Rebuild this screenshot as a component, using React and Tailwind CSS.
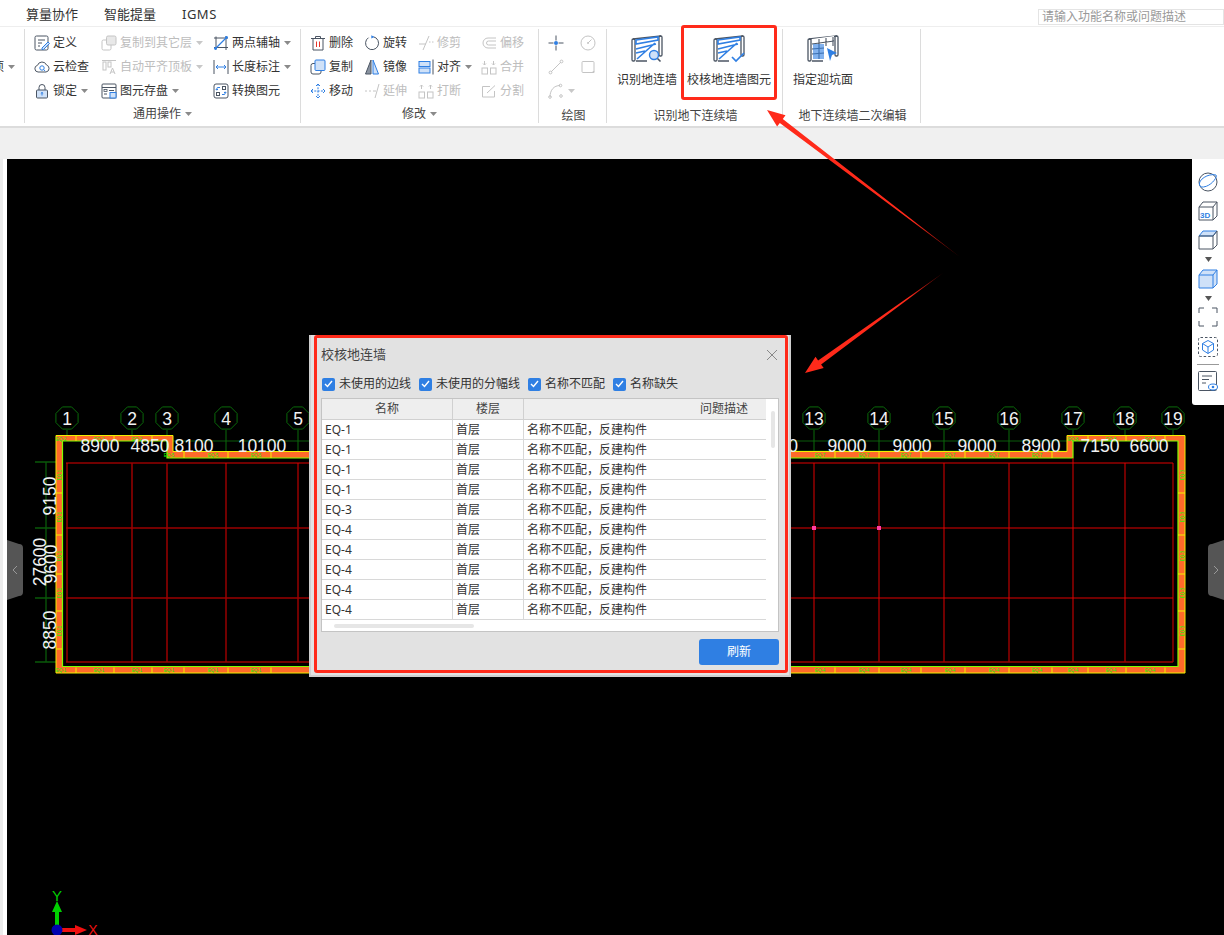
import React from 'react'

const INK = '#4b5563'
const BLUE = '#2f7fe3'
const PALE = '#cfe1f8'
const OFF = '#c4c4c4'

const Ico = ({ children, size = 16, vb = 16 }) => (
  <svg width={size} height={size} viewBox={`0 0 ${vb} ${vb}`} fill="none" strokeWidth="1" className="shrink-0">
    {children}
  </svg>
)

const Caret = ({ color = '#8a8a8a' }) => (
  <svg width="7" height="4" viewBox="0 0 7 4" className="shrink-0 ml-[4px]">
    <path d="M0 0h7L3.5 4z" fill={color} />
  </svg>
)

const icons = {
  define: (
    <Ico>
      <rect x="1" y="1" width="13" height="14" rx="1.5" stroke={INK} />
      <path d="M4 5h7M4 8h4M4 11h2" stroke={INK} />
      <path d="M8 13l6-6 1.5 1.5-6 6H8z" fill={PALE} stroke={BLUE} />
    </Ico>
  ),
  cloud: (
    <Ico>
      <path d="M4 13a3.4 3.4 0 0 1-.5-6.7A4.8 4.8 0 0 1 12.5 6 3.6 3.6 0 0 1 12 13z" stroke={INK} />
      <circle cx="8" cy="9" r="2.2" stroke={BLUE} />
      <path d="M9.7 10.7l1.5 1.3" stroke={BLUE} />
    </Ico>
  ),
  lock: (
    <Ico>
      <path d="M5 7V4.5a3 3 0 0 1 6 0V7" stroke={INK} />
      <rect x="2.5" y="7" width="11" height="8" rx="1" fill={PALE} stroke={INK} />
      <path d="M8 9.5v3M6.8 10.5L8 9.4l1.2 1.1" stroke={BLUE} />
    </Ico>
  ),
  copyLayer: (
    <Ico>
      <rect x="1" y="5" width="9" height="10" rx="1.5" stroke={OFF} fill="#fff" />
      <rect x="5.5" y="1" width="9.5" height="9" rx="1.5" stroke={OFF} fill="#e8e8e8" />
    </Ico>
  ),
  autoAlign: (
    <Ico>
      <path d="M1 1.5h14" stroke={OFF} />
      <rect x="2" y="3" width="3" height="8" stroke={OFF} />
      <rect x="7" y="3" width="3" height="5" stroke={OFF} />
      <path d="M9 15l2.5-6 2.5 6M10 13h3" stroke={OFF} />
    </Ico>
  ),
  save: (
    <Ico>
      <rect x="1" y="1" width="14" height="14" rx="1" stroke={INK} />
      <path d="M1 4.5h14" stroke={INK} />
      <rect x="3" y="6.5" width="3" height="2" stroke={INK} strokeWidth=".8" />
      <path d="M8 7.5h5M3 11h3" stroke={INK} />
      <rect x="9" y="9.5" width="6" height="5.5" fill={PALE} stroke={BLUE} />
    </Ico>
  ),
  twoPoint: (
    <Ico>
      <path d="M3 1.5v13M1 12.5h14M13 1v14M1 3h14" stroke={INK} />
      <path d="M2 14L14 2" stroke={BLUE} strokeWidth="1.3" />
      <circle cx="2.5" cy="13.5" r="1.4" fill={BLUE} />
      <circle cx="13.5" cy="2.5" r="1.4" fill={BLUE} />
    </Ico>
  ),
  length: (
    <Ico>
      <path d="M1 1v14M15 1v14" stroke={INK} />
      <path d="M3 8h10M5 6L3 8l2 2M11 6l2 2-2 2" stroke={BLUE} />
    </Ico>
  ),
  convert: (
    <Ico>
      <rect x="1" y="1" width="14" height="14" rx="2" stroke={INK} />
      <rect x="9.5" y="3.5" width="3" height="3" stroke={INK} />
      <rect x="3.5" y="9.5" width="3" height="3" stroke={INK} />
      <path d="M7 4.5H5a1.2 1.2 0 0 0-1.2 1.2V7M2.7 6L3.8 7.2 5 6M9 11.5h2a1.2 1.2 0 0 0 1.2-1.2V9M11 10l1.2-1.2 1.1 1.2" stroke={BLUE} />
    </Ico>
  ),
  trash: (
    <Ico>
      <path d="M1 3.5h14M5.5 3V1.5h5V3" stroke={INK} />
      <path d="M3 3.5V15h10V3.5" stroke={INK} />
      <path d="M6.5 6.5v5.5M9.5 6.5v5.5" stroke="#e5352b" />
    </Ico>
  ),
  rotate: (
    <Ico>
      <path d="M9.5 1.8A6.5 6.5 0 1 1 4.5 2.7" stroke={INK} />
      <path d="M7.3 0.3l3.2 1.6-3.2 1.7z" fill={BLUE} />
    </Ico>
  ),
  trim: (
    <Ico>
      <path d="M5 15L11 1" stroke={OFF} />
      <path d="M1 9h7" stroke={OFF} />
      <path d="M11 7h1.5M14 7h1.5" stroke={OFF} />
    </Ico>
  ),
  offset: (
    <Ico>
      <path d="M15 3H7a5 5 0 0 0 0 10h8" stroke={OFF} />
      <path d="M15 6H7.5a2 2 0 0 0 0 4H15" stroke={OFF} />
    </Ico>
  ),
  copy: (
    <Ico>
      <rect x="1" y="4.5" width="10" height="10.5" rx="2" stroke={INK} />
      <rect x="5" y="1" width="10" height="10.5" rx="1" fill={PALE} stroke={BLUE} />
    </Ico>
  ),
  mirror: (
    <Ico>
      <path d="M7 1v14H1.5z" fill="#8a93a0" stroke={INK} />
      <path d="M9 1v14h5.5z" fill={PALE} stroke={BLUE} />
    </Ico>
  ),
  align: (
    <Ico>
      <rect x="1" y="2.5" width="11" height="5" fill={PALE} stroke={BLUE} />
      <rect x="1" y="9" width="11" height="5" fill={PALE} stroke={BLUE} />
      <path d="M15 0.5v15" stroke={INK} />
    </Ico>
  ),
  merge: (
    <Ico>
      <rect x="1" y="9" width="5.5" height="6" stroke={OFF} />
      <rect x="9.5" y="9" width="5.5" height="6" stroke={OFF} />
      <path d="M3.5 2v4M2 4.5L3.5 6 5 4.5M12.5 2v4M11 4.5L12.5 6 14 4.5" stroke={OFF} />
    </Ico>
  ),
  move: (
    <Ico>
      <path d="M8 1v14M1 8h14" stroke={BLUE} strokeDasharray="2 1.3" />
      <path d="M6 3l2-2 2 2M6 13l2 2 2-2M3 6L1 8l2 2M13 6l2 2-2 2" stroke={BLUE} />
    </Ico>
  ),
  extend: (
    <Ico>
      <path d="M11 15l4-14" stroke={OFF} />
      <path d="M1 8h2M5 8h2M9 8h3" stroke={OFF} />
    </Ico>
  ),
  breakUp: (
    <Ico>
      <rect x="1" y="9" width="5.5" height="6" stroke={OFF} />
      <rect x="9.5" y="9" width="5.5" height="6" stroke={OFF} />
      <path d="M3.5 6V2M2 3.5L3.5 2 5 3.5M12.5 6V2M11 3.5L12.5 2 14 3.5" stroke={OFF} />
    </Ico>
  ),
  split: (
    <Ico>
      <path d="M9 3.5H1.5V14h12V8" stroke={OFF} />
      <path d="M6 10l8-7.5" stroke={OFF} />
    </Ico>
  ),
  point: (
    <Ico>
      <path d="M0.5 8h5M10.5 8h5M8 0.5v5M8 10.5v5" stroke={INK} />
      <circle cx="8" cy="8" r="2" fill={BLUE} />
    </Ico>
  ),
  dial: (
    <Ico>
      <circle cx="8" cy="8" r="7" stroke={OFF} />
      <path d="M8 8l3.5-3.5" stroke={OFF} />
      <circle cx="8" cy="8" r="1" fill={OFF} />
    </Ico>
  ),
  line: (
    <Ico>
      <path d="M3 13L13 3" stroke={OFF} />
      <circle cx="2.5" cy="13.5" r="1.4" stroke={OFF} />
      <circle cx="13.5" cy="2.5" r="1.4" stroke={OFF} />
    </Ico>
  ),
  rect: (
    <Ico>
      <rect x="2" y="2.5" width="12" height="11" rx="1" stroke={OFF} />
      <circle cx="13.5" cy="13" r="1" fill={OFF} />
    </Ico>
  ),
  arc: (
    <Ico>
      <path d="M2 14C2 7 6 2.5 12 2.5" stroke={OFF} />
      <circle cx="2" cy="14" r="1.3" stroke={OFF} />
      <circle cx="12.5" cy="2.5" r="1.3" stroke={OFF} />
      <circle cx="13" cy="13" r="1.3" stroke={OFF} />
    </Ico>
  ),
}

const WallFrame = ({ children }) => (
  <svg width="32" height="30" viewBox="0 0 32 30" fill="none" className="shrink-0">
    <path d="M2 5l28-3" stroke={INK} strokeWidth="1.5" />
    <rect x="1" y="5" width="3" height="22" rx="1.2" stroke={INK} strokeWidth="1.3" />
    <rect x="28" y="2" width="3" height="20" rx="1.2" stroke={INK} strokeWidth="1.3" />
    <path d="M5 27h11" stroke={INK} strokeWidth="1.5" />
    {children}
  </svg>
)

const BigIconFind = () => (
  <WallFrame>
    <path d="M5 6l22-3v3L5 10zM5 15l20-5M6 25L24 9M5 19l9-2" stroke={BLUE} strokeWidth="1.6" />
    <circle cx="23" cy="21" r="4.5" fill={PALE} stroke={BLUE} strokeWidth="1.4" />
    <path d="M26.5 24.5l3 3" stroke={INK} strokeWidth="1.6" />
  </WallFrame>
)

const BigIconCheck = () => (
  <WallFrame>
    <path d="M5 6l22-3v3L5 10zM5 15l20-5M6 25L24 9M5 19l9-2" stroke={BLUE} strokeWidth="1.6" />
    <path d="M19 23l4 4 8-8" stroke={BLUE} strokeWidth="1.7" />
  </WallFrame>
)

const BigIconFace = () => (
  <WallFrame>
    <path d="M5 5l22-3v16H5z" fill="#fff" />
    <path d="M12 5v20M19 4v8M26 3v9M5 10l22-3M5 15l12-1M5 20l12-1" stroke={INK} strokeWidth="1.1" />
    <rect x="6" y="10" width="11" height="15" fill={BLUE} opacity=".6" />
    <path d="M20 14l10 5-5 2-2 6z" fill={BLUE} />
  </WallFrame>
)

const Item = ({ icon, label, caret, off }) => (
  <div className="flex items-center h-6 text-xs">
    {icons[icon]}
    {label && <span className={`ml-[3px] whitespace-nowrap ${off ? 'text-[#bdbdbd]' : 'text-[#333]'}`}>{label}</span>}
    {caret && <Caret color={off ? '#c8c8c8' : '#8a8a8a'} />}
  </div>
)

const Group = ({ width, label, caret, children, labelClass = 'pt-[2px]' }) => (
  <div className="flex flex-col h-[94px] border-r border-[#dcdcdc]" style={{ width }}>
    <div className="flex-1 min-h-0 pt-[2px]">{children}</div>
    <div className={`flex items-center justify-center h-[20px] text-xs text-[#444] ${labelClass}`}>
      <span>{label}</span>
      {caret && <Caret />}
    </div>
  </div>
)

const BigButton = ({ icon, label, w }) => (
  <div className="flex flex-col items-center" style={{ width: w }}>
    <div className="mt-[3px] h-[30px] flex items-center">{icon}</div>
    <span className="mt-[8px] text-xs text-[#333] whitespace-nowrap">{label}</span>
  </div>
)

const Ribbon = () => (
  <div className="h-[102px] shrink-0 bg-white border-t border-[#eeeeee] border-b-2 border-b-[#dcdcdc] flex pt-[2px]">
    <Group width={25}>
      <div className="h-6" />
      <div className="flex items-center h-6 text-xs text-[#333]">
        <span className="w-[4px] overflow-hidden flex justify-end shrink-0">
          <span className="whitespace-nowrap">项</span>
        </span>
        <Caret />
      </div>
    </Group>
    <Group width={276} label="通用操作" caret>
      <div className="grid grid-cols-[67px_112px_1fr] pl-[9px]">
        <Item icon="define" label="定义" />
        <Item icon="copyLayer" label="复制到其它层" caret off />
        <Item icon="twoPoint" label="两点辅轴" caret />
        <Item icon="cloud" label="云检查" />
        <Item icon="autoAlign" label="自动平齐顶板" caret off />
        <Item icon="length" label="长度标注" caret />
        <Item icon="lock" label="锁定" caret />
        <Item icon="save" label="图元存盘" caret />
        <Item icon="convert" label="转换图元" />
      </div>
    </Group>
    <Group width={238} label="修改" caret>
      <div className="grid grid-cols-[54px_54px_63px_1fr] pl-[9px]">
        <Item icon="trash" label="删除" />
        <Item icon="rotate" label="旋转" />
        <Item icon="trim" label="修剪" off />
        <Item icon="offset" label="偏移" off />
        <Item icon="copy" label="复制" />
        <Item icon="mirror" label="镜像" />
        <Item icon="align" label="对齐" caret />
        <Item icon="merge" label="合并" off />
        <Item icon="move" label="移动" />
        <Item icon="extend" label="延伸" off />
        <Item icon="breakUp" label="打断" off />
        <Item icon="split" label="分割" off />
      </div>
    </Group>
    <Group width={68} label="绘图" labelClass="pt-[6px] pl-[2px]">
      <div className="grid grid-cols-[32px_1fr] pl-[9px]">
        <Item icon="point" />
        <Item icon="dial" />
        <Item icon="line" />
        <Item icon="rect" />
        <Item icon="arc" caret off />
      </div>
    </Group>
    <Group width={176} label="识别地下连续墙" labelClass="pt-[6px] pl-[2px]">
      <div className="flex pl-[2px] items-start">
        <BigButton icon={<BigIconFind />} label="识别地连墙" w={76} />
        <BigButton icon={<BigIconCheck />} label="校核地连墙图元" w={88} />
      </div>
    </Group>
    <Group width={138} label="地下连续墙二次编辑" labelClass="pt-[6px] pl-[2px]">
      <div className="flex pl-[2px] items-start">
        <BigButton icon={<BigIconFace />} label="指定迎坑面" w={76} />
      </div>
    </Group>
  </div>
)

const AXES = [
  ['1', 67], ['2', 132], ['3', 167], ['4', 226], ['5', 298],
  ['13', 814], ['14', 879], ['15', 944], ['16', 1009], ['17', 1073], ['18', 1125], ['19', 1173],
]

const TOP_DIMS = [
  ['8900', 100], ['4850', 150], ['8100', 194], ['10100', 262],
  ['0', 793], ['9000', 847], ['9000', 912], ['9000', 977], ['8900', 1041], ['7150', 1100], ['6600', 1149],
]

const SIDE_DIMS = [
  ['9150', 50, 496], ['27600', 40, 562], ['9600', 51, 564], ['8850', 50, 630],
]

const BOTTOM_TICKS = [76, 114, 152, 184, 228, 271, 790, 835, 879, 921, 965, 1009, 1052, 1088, 1126, 1165]
const TOP_TICKS = [76, 114, 152, 184, 228, 271, 835, 879, 921, 965, 1009, 1052, 1088, 1126, 1165]
const SIDE_TICKS = [493, 535, 574, 611, 649]

const octagon = (cx, cy, r) =>
  Array.from({ length: 8 }, (_, i) => {
    const a = (Math.PI / 8) * (2 * i + 1)
    return `${cx + r * Math.cos(a)},${cy + r * Math.sin(a)}`
  }).join(' ')

const Drawing = () => (
  <svg className="absolute inset-0" width="1217" height="776" viewBox="7 159 1217 776">
    {/* dimension lines */}
    <g stroke="#0a5a0a" strokeWidth="1">
      <path d="M66 441H170M66 451H170M173 441H310M790 441H1067M790 451H1067M1073 451H1172M1172 441V463" />
      <path d="M35 462H56M35 528H56M35 598H56M35 662H56" strokeWidth="1.3" />
      <path d="M46 462V662" strokeWidth="1.3" />
    </g>
    {AXES.map(([n, x]) => (
      <g key={n}>
        <polygon points={octagon(x, 418, 12)} fill="none" stroke="#0a6a0a" />
        <path d={`M${x} 430V463`} stroke="#0a6a0a" />
      </g>
    ))}

    {/* wall band */}
    <path d="M56 435.5H173V451.5H1067V435.5H1185V673H56Z" fill="#ff6a2a" stroke="#f0f000" strokeWidth="1" />
    <path d="M62.5 441H167V458H1073V441H1178V666.5H62.5Z" fill="#000" stroke="#80ff00" strokeWidth="1.2" />
    <g stroke="#f2f200" strokeWidth="1">
      {BOTTOM_TICKS.map((x) => <path key={x} d={`M${x} 667.5V673`} />)}
      {TOP_TICKS.map((x) => (
        <path key={x} d={x < 173 || x > 1067 ? `M${x} 435.5V441` : `M${x} 452V458`} />
      ))}
      {SIDE_TICKS.map((y) => <path key={y} d={`M56 ${y}H62M1178 ${y}H1185`} />)}
    </g>
    <g fill="#00ff00" fontSize="4.5" fontFamily="'Liberation Sans', sans-serif" textAnchor="middle">
      {BOTTOM_TICKS.slice(0, 6).map((x) => <text key={x} x={x - 15} y="672">EQ-1</text>)}
      {BOTTOM_TICKS.slice(7).map((x) => <text key={x} x={x - 15} y="672">EQ-4</text>)}
      {TOP_TICKS.slice(0, 3).map((x) => <text key={x} x={x - 15} y="440.5">EQ-2</text>)}
      {TOP_TICKS.slice(3, 6).map((x) => <text key={x} x={x - 15} y="456.5">EQ-5</text>)}
      {TOP_TICKS.slice(6, 12).map((x) => <text key={x} x={x - 15} y="456.5">EQ-7</text>)}
      {TOP_TICKS.slice(12).map((x) => <text key={x} x={x - 15} y="440.5">EQ-8</text>)}
      {SIDE_TICKS.map((y) => (
        <g key={y}>
          <text transform={`translate(61 ${y - 18}) rotate(-90)`}>EQ-1</text>
          <text transform={`translate(1184 ${y - 18}) rotate(-90)`}>EQ-3</text>
        </g>
      ))}
    </g>

    {/* grid */}
    <g stroke="#e00000" strokeWidth="1">
      <path d="M66 463H1173M790 528H1173M790 598H1173" />
      <path d="M67 463V662M226 463V662M298 463V662M814 463V662M879 463V662M944 463V662M1009 463V662M1073 458V662M1125 463V662M1173 463V662" />
    </g>
    <g stroke="#9a0000" strokeWidth="1.5">
      <path d="M66 528H310M66 598H310M66 662H310M790 662H1173M132 463V662M167 463V662" />
    </g>
    <rect x="812" y="526" width="4" height="4" fill="#ff3ea5" />
    <rect x="877" y="526" width="4" height="4" fill="#ff3ea5" />

    {/* labels */}
    <g fill="#f2f2f2" fontFamily="'Liberation Sans', sans-serif" textAnchor="middle" fontSize="17.5">
      {AXES.map(([n, x]) => <text key={n} x={x} y="425">{n}</text>)}
      {TOP_DIMS.map(([t, x], i) => <text key={i} x={x} y="452">{t}</text>)}
      {SIDE_DIMS.map(([t, x, y]) => (
        <text key={t} transform={`translate(${x + 6} ${y}) rotate(-90)`}>{t}</text>
      ))}
    </g>

    {/* world axes */}
    <path d="M55 925V912H52L57 901l5 11h-3V925z" fill="#00d000" />
    <path d="M57 928H75v-3l12 5-12 5v-3H57z" fill="#f01010" />
    <circle cx="57" cy="930" r="5.5" fill="#0000b0" />
    <text x="57" y="901" fontSize="15" fill="#00d000" textAnchor="middle" fontFamily="'Liberation Sans', sans-serif">Y</text>
    <text x="93" y="935" fontSize="14" fill="#f01010" textAnchor="middle" fontFamily="'Liberation Sans', sans-serif">X</text>
  </svg>
)

const SideTab = ({ side }) => (
  <svg width="16" height="60" viewBox="0 0 16 60" className={`absolute top-[381px] ${side === 'left' ? 'left-0' : 'right-0 -scale-x-100'}`}>
    <path d="M0 0l12 4a4 4 0 0 1 4 4v44a4 4 0 0 1-4 4L0 60z" fill="#555" />
    <path d="M10 26l-4 4 4 4" fill="none" stroke="#999" strokeWidth="1" />
  </svg>
)

const ToolIcon = ({ children, className = '' }) => (
  <svg width="22" height="22" viewBox="0 0 22 22" fill="none" className={`shrink-0 ${className}`}>{children}</svg>
)

const DownMark = () => (
  <svg width="7" height="5" viewBox="0 0 7 5" className="shrink-0 mt-[6px]">
    <path d="M0 0h7L3.5 5z" fill="#555" />
  </svg>
)

const ViewBar = () => (
  <div className="absolute top-0 right-0 w-[32px] h-[246px] bg-white rounded-bl-[3px] flex flex-col items-center pt-[12px]">
    <ToolIcon>
      <ellipse cx="11" cy="11" rx="9" ry="9" stroke={INK} />
      <path d="M2.5 14C1 9 11 2 19 4c2 2-6 13-15 12z" stroke={BLUE} />
    </ToolIcon>
    <ToolIcon className="mt-[7px]">
      <path d="M2 7l4-5h14v14l-4 4H2zM2 7h14v13M16 7l4-5" stroke={INK} />
      <text x="3" y="18" fontSize="8" fontWeight="700" fill={BLUE} fontFamily="'Liberation Sans', sans-serif">3D</text>
    </ToolIcon>
    <ToolIcon className="mt-[7px]">
      <path d="M2 7l4-5h14l-4 5z" fill={PALE} stroke={BLUE} />
      <path d="M2 7h14v13H2zM16 7l4-5v14l-4 4" stroke={INK} />
    </ToolIcon>
    <DownMark />
    <ToolIcon className="mt-[6px]">
      <path d="M2 7l4-5h14v14l-4 4H2z" fill={PALE} stroke={BLUE} />
      <path d="M2 7h14v13M16 7l4-5" stroke={BLUE} />
    </ToolIcon>
    <DownMark />
    <ToolIcon className="mt-[5px]">
      <path d="M2 7V2h5M15 2h5v5M20 15v5h-5M7 20H2v-5" stroke={INK} />
    </ToolIcon>
    <ToolIcon className="mt-[8px]">
      <rect x="1.5" y="1.5" width="19" height="19" rx="2" stroke={INK} strokeDasharray="2.5 2" />
      <path d="M11 4.5l5.5 3v6.5L11 17.5 5.5 14V7.5zM5.5 7.5L11 11l5.5-3.5M11 11v6.5" stroke={BLUE} />
    </ToolIcon>
    <div className="w-[22px] h-px bg-[#999] mt-[6px]" />
    <ToolIcon className="mt-[5px]">
      <rect x="1.5" y="1.5" width="18" height="19" rx="1" stroke={INK} />
      <path d="M5 6h10M5 9.5h7M5 13h4" stroke={INK} />
      <ellipse cx="16" cy="17" rx="4.5" ry="3" fill="#fff" stroke={BLUE} />
      <circle cx="16" cy="17" r="1.3" fill={BLUE} />
    </ToolIcon>
  </div>
)

const FILTERS = ['未使用的边线', '未使用的分幅线', '名称不匹配', '名称缺失']

const ROWS = ['EQ-1', 'EQ-1', 'EQ-1', 'EQ-1', 'EQ-3', 'EQ-4', 'EQ-4', 'EQ-4', 'EQ-4', 'EQ-4']

const CheckBox = () => (
  <span className="w-[13px] h-[13px] rounded-[2px] bg-[#2f7fe3] flex items-center justify-center shrink-0">
    <svg width="9" height="8" viewBox="0 0 9 8" fill="none">
      <path d="M1 4l2.5 2.5L8 1" stroke="#fff" strokeWidth="1.4" />
    </svg>
  </span>
)

const CheckDialog = () => (
  <div className="absolute left-[302px] top-[176px] w-[482px] h-[342px] bg-[#e2e2e2] border-2 border-t-0 border-[#cfcfcf] flex flex-col pl-[10px] pr-[10px] z-10 text-[#333]">
    <div className="flex items-center justify-between h-[40px] shrink-0">
      <span className="text-[13px] text-[#444]">校核地连墙</span>
      <svg width="12" height="12" viewBox="0 0 12 12" className="mr-[1px]">
        <path d="M1 1l10 10M11 1L1 11" stroke="#888" strokeWidth="1" />
      </svg>
    </div>
    <div className="flex items-center h-[18px] gap-[8px] pl-[1px] text-xs shrink-0">
      {FILTERS.map((f) => (
        <label key={f} className="flex items-center gap-[4px]">
          <CheckBox />
          <span>{f}</span>
        </label>
      ))}
    </div>
    <div className="relative mt-[5px] w-[458px] h-[234px] shrink-0 bg-white border border-[#c4c4c4] text-xs">
      <div className="flex w-[444px] h-[21px] bg-[#eeeeee] border-b border-[#d0d0d0] text-[#444]">
        <div className="w-[131px] flex items-center justify-center border-r border-[#d0d0d0]">名称</div>
        <div className="w-[71px] flex items-center justify-center border-r border-[#d0d0d0]">楼层</div>
        <div className="flex-1 flex items-center justify-end pr-[18px]">问题描述</div>
      </div>
      {ROWS.map((name, i) => (
        <div key={i} className="flex w-[444px] h-[20px] border-b border-[#d8d8d8]">
          <div className="w-[131px] flex items-center pl-[3px] border-r border-[#d8d8d8]">{name}</div>
          <div className="w-[71px] flex items-center pl-[3px] border-r border-[#d8d8d8]">首层</div>
          <div className="flex-1 flex items-center pl-[3px]">名称不匹配，反建构件</div>
        </div>
      ))}
      <div className="absolute left-[449px] top-[12px] w-[4px] h-[37px] rounded-full bg-[#e6e6e6]" />
      <div className="absolute left-[12px] top-[225px] w-[140px] h-[4px] rounded-full bg-[#e6e6e6]" />
    </div>
    <div className="flex justify-end mt-[7px] shrink-0">
      <button className="w-[80px] h-[26px] rounded-[3px] bg-[#2f7fe3] text-white text-xs">刷新</button>
    </div>
    <div className="absolute left-[3px] top-0 w-[474px] h-[338px] border-[3px] border-[#ff2a1a] rounded-[3px] pointer-events-none" />
  </div>
)

const Arrows = () => (
  <svg className="absolute inset-0 pointer-events-none z-20" width="1224" height="935" viewBox="0 0 1224 935">
    <defs>
      <linearGradient id="fadeA" gradientUnits="userSpaceOnUse" x1="767" y1="110" x2="960" y2="257">
        <stop offset="0.75" stopColor="#ff2a1a" />
        <stop offset="1" stopColor="#5a0000" />
      </linearGradient>
      <linearGradient id="fadeB" gradientUnits="userSpaceOnUse" x1="805" y1="373" x2="943" y2="273">
        <stop offset="0.75" stopColor="#ff2a1a" />
        <stop offset="1" stopColor="#5a0000" />
      </linearGradient>
    </defs>
    <polygon points="767,110 785.5,115.3 782.8,118.9 960,257 779.8,122.9 777.1,126.5" fill="url(#fadeA)" />
    <polygon points="805,373 823.7,368.1 821.1,364.4 943,273 818.1,360.4 815.5,356.7" fill="url(#fadeB)" />
  </svg>
)

export default function App() {
  return (
    <div className="relative w-[1224px] h-[935px] overflow-hidden bg-white flex flex-col text-[#333] [font-family:'Noto_Sans','Noto_Sans_CJK_SC',sans-serif]">
      {/* menu bar */}
      <div className="h-[26px] shrink-0 flex items-center pt-[4px] pl-[26px] text-[13px] bg-white">
        <span className="w-[78px]">算量协作</span>
        <span className="w-[78px]">智能提量</span>
        <span className="tracking-[0.5px]">IGMS</span>
        <div className="ml-auto mt-[4px] w-[186px] h-[16px] border border-[#e4e4e4] flex items-center pl-[3px] text-xs text-[#999] overflow-hidden whitespace-nowrap">
          请输入功能名称或问题描述
        </div>
      </div>

      <Ribbon />

      <div className="h-[31px] shrink-0 bg-[#f0f0f0]" />

      {/* work area */}
      <div className="flex-1 flex min-h-0">
        <div className="w-[7px] shrink-0 bg-white border-l-[3px] border-[#ececec]" />
        <div className="relative flex-1 bg-black">
          <Drawing />
          <SideTab side="left" />
          <SideTab side="right" />
          <ViewBar />
          <CheckDialog />
        </div>
      </div>

      {/* callout round the ribbon button */}
      <div className="absolute left-[681px] top-[25px] w-[96px] h-[75px] border-[3px] border-[#ff2a1a] rounded-[3px] z-20" />
      <Arrows />
    </div>
  )
}
